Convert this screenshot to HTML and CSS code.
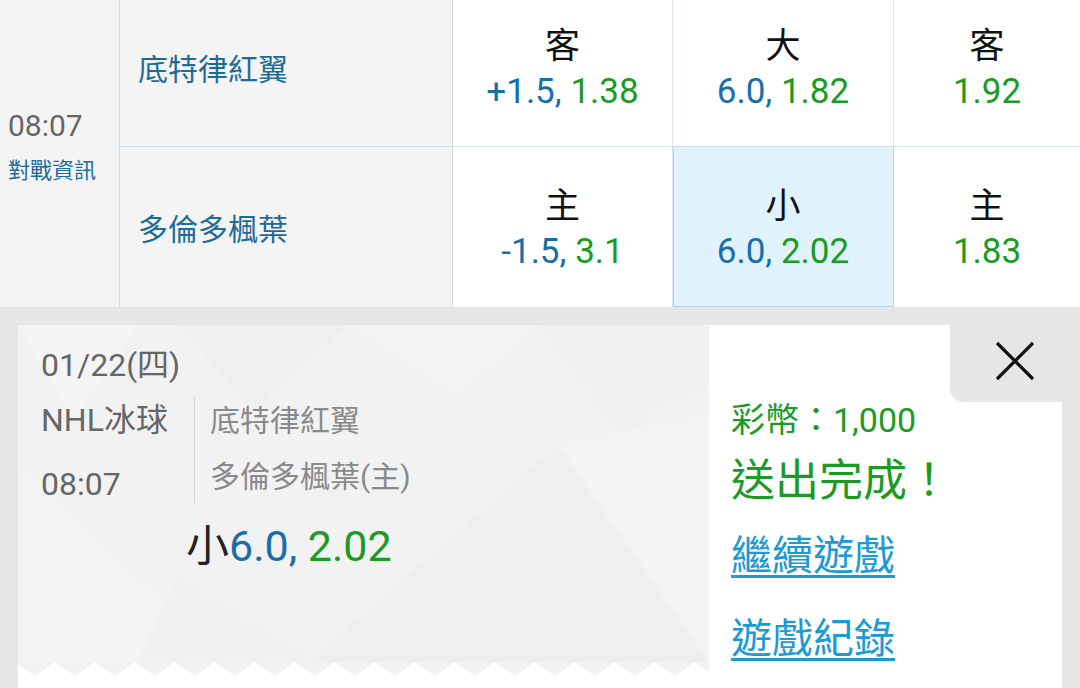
FILE: index.html
```html
<!DOCTYPE html>
<html lang="zh-Hant">
<head>
    <meta charset="UTF-8">
    <meta name="viewport" content="width=device-width, initial-scale=1.0">
    <title>投注完成</title>
    <link rel="stylesheet" href="styles.css">
</head>
<body>

    <div class="match">
        <div class="time-cell">
            <div class="time">08:07</div>
            <a class="info-link" href="#">對戰資訊</a>
        </div>

        <div class="team row-top">底特律紅翼</div>
        <div class="odd row-top">
            <div class="pick">客</div>
            <div class="val"><span class="line">+1.5,</span> <span class="rate">1.38</span></div>
        </div>
        <div class="odd row-top">
            <div class="pick">大</div>
            <div class="val"><span class="line">6.0,</span> <span class="rate">1.82</span></div>
        </div>
        <div class="odd odd-last row-top">
            <div class="pick">客</div>
            <div class="val"><span class="rate">1.92</span></div>
        </div>

        <div class="team">多倫多楓葉</div>
        <div class="odd">
            <div class="pick">主</div>
            <div class="val"><span class="line">-1.5,</span> <span class="rate">3.1</span></div>
        </div>
        <div class="odd picked">
            <div class="pick">小</div>
            <div class="val"><span class="line">6.0,</span> <span class="rate">2.02</span></div>
        </div>
        <div class="odd odd-last">
            <div class="pick">主</div>
            <div class="val"><span class="rate">1.83</span></div>
        </div>
    </div>

    <div class="slip">
        <div class="card">
            <div class="ticket">
                <!-- 背景的淡色多邊形 -->
                <svg class="ticket-art" width="691" height="337" viewBox="0 0 691 337" aria-hidden="true">
                    <polygon points="0,0 120,0 55,95" fill="#f5f5f5"/>
                    <polygon points="160,0 330,0 235,85" fill="#efefef"/>
                    <polygon points="330,0 520,0 440,70" fill="#f4f4f4"/>
                    <polygon points="520,0 691,0 691,60 600,110" fill="#f0f0f0"/>
                    <polygon points="0,140 210,337 0,337" fill="#f4f4f4"/>
                    <polygon points="290,337 540,120 691,337" fill="#efefef"/>
                    <polygon points="540,120 691,90 691,337" fill="#f4f4f4"/>
                    <polygon points="160,250 300,337 120,337" fill="#f0f0f0"/>
                </svg>

                <div class="date">01/22(四)</div>
                <div class="game">
                    <div class="game-side">
                        <div>NHL冰球</div>
                        <div>08:07</div>
                    </div>
                    <div class="game-teams">
                        <div>底特律紅翼</div>
                        <div>多倫多楓葉(主)</div>
                    </div>
                </div>
                <div class="bet"><span class="bet-pick">小</span><span class="line">6.0,</span> <span class="rate">2.02</span></div>
            </div>

            <div class="result">
                <div class="coins">彩幣：1,000</div>
                <div class="done">送出完成！</div>
                <div class="next"><a href="#">繼續遊戲</a></div>
                <div class="history"><a href="#">遊戲紀錄</a></div>
            </div>

            <button class="close" type="button" aria-label="關閉">
                <svg width="40" height="40" viewBox="0 0 40 40">
                    <path d="M2 2 L38 38 M38 2 L2 38" stroke="#111" stroke-width="3.2" fill="none"/>
                </svg>
            </button>
        </div>
    </div>

</body>
</html>
```

FILE: styles.css
```css
* {
    box-sizing: border-box;
}

html,
body {
    margin: 0;
}

body {
    width: 1080px;
    height: 688px;
    overflow: hidden;
    background-color: #e6e6e6;
    font-family: Roboto, "Noto Sans CJK TC", sans-serif;
}

/* 賽事表格 */
.match {
    display: grid;
    grid-template-columns: 120px 333px 220px 221px 1fr;
    grid-template-rows: 160px 160px;
    margin-top: -13px;
    background-color: #fff;
}

.time-cell {
    grid-row: span 2;
    display: flex;
    flex-direction: column;
    justify-content: center;
    padding: 0 0 0 8px;
    background-color: #f4f4f4;
    border-right: 1px solid #d9d9d9;
}

.time {
    font-size: 30px;
    line-height: 36px;
    color: #666;
}

.info-link {
    margin-top: 12px;
    font-size: 22px;
    line-height: 30px;
    color: #236c9c;
    text-decoration: none;
}

.team {
    display: flex;
    align-items: center;
    padding-left: 18px;
    font-size: 30px;
    color: #1f6b98;
    background-color: #f4f4f4;
    border-right: 1px solid #dcdcdc;
}

.row-top {
    border-bottom: 1px solid #d3e0e8;
}

.odd {
    display: flex;
    flex-direction: column;
    align-items: center;
    justify-content: center;
    padding-top: 6px;
    font-size: 35px;
    border-right: 1px solid #dfe6ea;
}

.odd-last {
    border-right: none;
}

.odd.picked {
    background-color: #e0f2fb;
    border-right-color: #b9d5e4;
    box-shadow: inset 1px 0 0 #b9d5e4, inset 0 -1px 0 #b9d5e4;
}

.pick {
    line-height: 44px;
    color: #111;
}

.val {
    line-height: 46px;
}

.line {
    color: #176eab;
}

.rate {
    color: #1b9a26;
}

/* 投注單 */
.slip {
    padding: 18px 18px 0;
}

.card {
    position: relative;
    display: flex;
    height: 363px;
}

.ticket {
    position: relative;
    width: 691px;
    padding: 20px 0 0 23px;
    background:
        linear-gradient(#f2f2f2, #f2f2f2) 0 0 / 100% 337px no-repeat,
        conic-gradient(from 125deg at 50% 0, #fff 110deg, #f2f2f2 0) 17px 337px / 40px 14px repeat-x,
        #fff;
}

.ticket-art {
    position: absolute;
    top: 0;
    left: 0;
}

.date,
.game,
.bet {
    position: relative;
}

.date {
    font-size: 32px;
    line-height: 40px;
    color: #666;
}

.game {
    display: flex;
    margin-top: 12px;
}

.game-side {
    display: flex;
    flex-direction: column;
    gap: 18px;
    width: 153px;
    font-size: 32px;
    line-height: 46px;
    color: #666;
}

.game-teams {
    display: flex;
    flex-direction: column;
    gap: 10px;
    height: 106px;
    padding: 1px 0 0 15px;
    border-left: 1px solid #d8d8d8;
    font-size: 30px;
    line-height: 46px;
    color: #8a8a8a;
}

.bet {
    margin: 13px 0 0 145px;
    font-size: 43px;
    line-height: 52px;
}

.bet-pick {
    color: #222;
}

.result {
    width: 353px;
    padding: 73px 0 0 22px;
    background-color: #fff;
}

.coins {
    font-size: 34px;
    line-height: 44px;
    color: #1b9a26;
}

.done {
    margin-top: 11px;
    font-size: 44px;
    line-height: 56px;
    color: #1b9a26;
}

.next,
.history {
    font-size: 41px;
    line-height: 50px;
}

.next {
    margin-top: 22px;
}

.history {
    margin-top: 33px;
}

.next a,
.history a {
    color: #1b9ad6;
    text-decoration-thickness: 3px;
    text-underline-offset: 5px;
}

.close {
    position: absolute;
    top: 0;
    right: -18px;
    display: flex;
    align-items: center;
    justify-content: center;
    width: 130px;
    height: 77px;
    padding: 0 0 5px;
    border: none;
    border-bottom-left-radius: 14px;
    background-color: #e6e6e6;
    cursor: pointer;
}
```
